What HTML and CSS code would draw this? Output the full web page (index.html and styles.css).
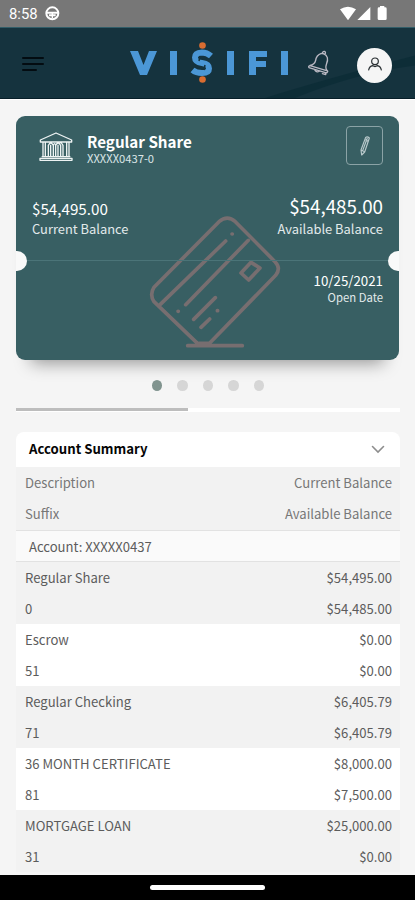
FILE: index.html
```html
<!DOCTYPE html>
<html lang="en">
<head>
<meta charset="utf-8">
<title>Visifi</title>
<link rel="stylesheet" href="styles.css">
</head>
<body>
<div class="status">
  <span class="time">8:58</span>
  <svg class="wheel" viewBox="0 0 45 45"><circle cx="22" cy="22" r="18" fill="none" stroke="#fff" stroke-width="6"/><path d="M5 20H39M12 28H32" stroke="#fff" stroke-width="6"/><path d="M22 20V36" stroke="#fff" stroke-width="4"/></svg>
  <svg class="signals" viewBox="0 0 144 45"><path d="M3 10Q27 -6 51 10L27 43ZM55 42L94 3V42ZM116 8Q116 4 120 4H123V0H136V4H139Q143 4 143 8V38Q143 42 139 42H120Q116 42 116 38Z" fill="#fff"/></svg>
</div>
<header class="top">
  <svg class="swoosh" viewBox="0 0 150 71" preserveAspectRatio="none"><path d="M0 71Q60 52 150 28V38Q90 46 30 71Z"/></svg>
  <svg class="burger" viewBox="0 0 22 16"><path d="M1 2H21M1 8H21M1 14H14" stroke="#030c11" stroke-width="2" stroke-linecap="round"/></svg>
  <svg class="logo" viewBox="0 0 160 44" role="img" aria-label="Visifi">
    <g fill="#4b97d6"><path d="M0 10H8L13.5 24L19 10H27L17 34H10ZM40 10H47V34H40ZM97 10H104V34H97ZM119 10H137V16H126V20H136V26H126V34H119ZM151 10H158V34H151Z"/></g>
    <path d="M81 15Q77 11.500 72 11.500Q65 12 65 16.500Q65 21 72 22Q79 23 79 27.500Q79 32 72 32Q66 32 62.500 29" fill="none" stroke="#4b97d6" stroke-width="6"/>
    <path d="M70 15L69 20M75 24L74 29" stroke="#15333e" stroke-width="1.500"/>
    <circle cx="72.500" cy="4.500" r="3.300" fill="#d96d31"/><circle cx="72.500" cy="38.500" r="3.300" fill="#d96d31"/>
  </svg>
  <svg class="bell" viewBox="0 0 70 80" fill="none" stroke="#b9b8c2" stroke-width="4" stroke-linecap="round" stroke-linejoin="round"><path d="M42 10Q27 15 25 31Q22 43 8 46Q3 48 5 52L54 67Q60 69 61 63Q52 55 57 42Q67 19 48 11ZM46 9Q46 3 51 4Q56 6 53 12M8 46L60 62M22 58Q27 68 36 63M54 67L55 73L45 70"/></svg>
  <div class="avatar"><svg viewBox="0 0 42 42" fill="none" stroke="#292f32" stroke-width="3.600" stroke-linecap="round"><circle cx="21" cy="13" r="10"/><path d="M2 39Q4 28 14 26L21 29L28 26Q38 28 40 39"/></svg></div>
</header>
<main>
  <section class="card">
    <svg class="mark" viewBox="0 0 450 465" fill="none" stroke="#776e70" stroke-width="11" stroke-linecap="round" stroke-linejoin="round"><path d="M42 247L237 50Q262 29 286 50L405 170Q424 190 407 211L210 413M170 413L42 290Q28 269 42 247M61 298L257 108M325 106L137 299M226 278L161 343M209 342L183 367M143 422H307M177 415H205M333 172L360 189L326 225L303 204Z"/><path d="M276 87h1M114 319h1M232 317h1"/></svg>
    <div class="head">
      <svg class="bank" viewBox="0 0 102 90" fill="none" stroke="#edf3f3" stroke-width="4" stroke-linejoin="round"><path d="M4 24L51 3L98 24V30H4ZM8 74H94M3 79H99V85H3ZM12 31V73M19 31V73M83 31V73M90 31V73M28 73V40Q35 26 43 40V73M35 73V38M50 73V40Q57 26 65 40V73M57 73V38M72 73V40Q67 30 62 32M43 40Q47 30 50 40"/></svg>
      <div class="title"><b>Regular Share</b><span>XXXXX0437-0</span></div>
      <div class="edit"><svg viewBox="0 0 30 60" fill="none" stroke="#b9c9cb" stroke-width="3.500" stroke-linejoin="round"><path d="M3 42L17 4Q22 0 28 6L14 48L5 57ZM8 44L22 6M4 43L14 47M15 11L25 15"/></svg></div>
    </div>
    <div class="balances">
      <div class="bal"><span class="amt">$54,495.00</span><span class="lab">Current Balance</span></div>
      <div class="bal right"><span class="amt big">$54,485.00</span><span class="lab">Available Balance</span></div>
    </div>
    <div class="tear"></div>
    <div class="opened"><span class="date">10/25/2021</span><span class="small">Open Date</span></div>
  </section>
  <div class="dots"><i class="on"></i><i></i><i></i><i></i><i></i></div>
  <div class="track"><div class="thumb"></div></div>
  <section class="summary">
    <h2><span>Account Summary</span><svg viewBox="0 0 14 9"><path d="M1.500 1.500L7 7L12.500 1.500" fill="none" stroke="#8d8d8d" stroke-width="1.600" stroke-linecap="round"/></svg></h2>
    <div class="group labels"><div class="row"><span>Description</span><span>Current Balance</span></div><div class="row"><span>Suffix</span><span>Available Balance</span></div></div>
    <div class="account">Account: XXXXX0437</div>
    <div class="group"><div class="row"><span>Regular Share</span><span>$54,495.00</span></div><div class="row"><span>0</span><span>$54,485.00</span></div></div>
    <div class="group white"><div class="row"><span>Escrow</span><span>$0.00</span></div><div class="row"><span>51</span><span>$0.00</span></div></div>
    <div class="group"><div class="row"><span>Regular Checking</span><span>$6,405.79</span></div><div class="row"><span>71</span><span>$6,405.79</span></div></div>
    <div class="group white"><div class="row"><span>36 MONTH CERTIFICATE</span><span>$8,000.00</span></div><div class="row"><span>81</span><span>$7,500.00</span></div></div>
    <div class="group"><div class="row"><span>MORTGAGE LOAN</span><span>$25,000.00</span></div><div class="row"><span>31</span><span>$0.00</span></div></div>
  </section>
</main>
<footer class="nav"><div class="pill"></div></footer>
</body>
</html>
```
FILE: styles.css
```css
* { box-sizing: border-box; }
body { margin: 0; width: 415px; height: 900px; overflow: hidden; display: flex; flex-direction: column; background: #f5f5f5; font-family: "Noto Sans CJK SC", "Noto Sans", sans-serif; color: #5c5c5c; }
svg { display: block; flex: none; }
.status { height: 27px; flex: none; background: #777; display: flex; align-items: center; padding: 0 28px 0 9px; }
.time { font: 14.8px/28px Roboto, sans-serif; color: #fff; width: 36px; }
.wheel { width: 15px; height: 15px; }
.signals { width: 48px; height: 15px; margin-left: auto; }
.top { position: relative; height: 72px; flex: none; background: #15333e; border-top: 1px solid #315d68; border-bottom: 1px solid #071f29; display: flex; align-items: center; padding: 0 23px 0 22px; }
.swoosh { position: absolute; right: 0; top: 0; width: 150px; height: 70px; fill: #08293399; }
.burger { width: 22px; height: 16px; margin-top: 2px; }
.logo { width: 160px; height: 44px; margin-left: 86px; }
.bell { position: relative; width: 24px; height: 27px; margin-left: 17px; }
.avatar { position: relative; width: 35px; height: 35px; margin: 5px 0 0 auto; background: #f5f5f5; border-radius: 50%; display: grid; place-items: center; }
.avatar svg { width: 14px; height: 14px; margin-top: -3px; }
main { flex: 1; min-height: 0; padding: 17px 15px 0 16px; overflow: hidden; border-top: 1px solid #fff; }
.card { position: relative; width: 383px; height: 244px; margin-top: -1px; background: #385f63; border-radius: 9px; color: #fff; box-shadow: 0 18px 16px -15px rgba(0,0,0,.4); }
.mark { position: absolute; left: 124px; top: 89px; width: 150px; height: 155px; }
.head { position: relative; height: 78px; padding: 10px 16px 0 23px; display: flex; align-items: flex-start; }
.bank { width: 34px; height: 30px; margin-top: 6px; }
.title { margin-left: 14px; display: flex; flex-direction: column; padding-top: 5px; }
.title b { font-size: 15.2px; line-height: 20px; }
.title span { font-size: 11.2px; line-height: 15px; color: #dce6e7; }
.edit { margin-left: auto; width: 37px; height: 39px; border: 1px solid #8ba3a6; border-radius: 4px; display: grid; place-items: center; }
.edit svg { width: 10px; height: 20px; }
.balances { position: relative; height: 66px; padding: 0 16px; display: flex; justify-content: space-between; }
.bal { display: flex; flex-direction: column; }
.right { text-align: right; }
.amt { height: 25px; font-size: 15.2px; line-height: 24px; padding-top: 2px; }
.amt.big { font-size: 18.8px; padding: 0; }
.lab { font-size: 12.9px; line-height: 20px; color: #e2eaeb; }
.tear { height: 1px; position: relative; background: #4b7478; }
.tear::before, .tear::after { content: ""; position: absolute; top: -9px; width: 11px; height: 20px; background: #f9f9f9; }
.tear::before { left: 0; border-radius: 0 10px 10px 0; }
.tear::after { right: 0; border-radius: 10px 0 0 10px; }
.opened { position: relative; display: flex; flex-direction: column; text-align: right; padding: 11px 16px 0; }
.date { font-size: 13.3px; line-height: 17px; }
.small { font-size: 11.3px; line-height: 16px; color: #e2eaeb; }
.dots { display: flex; justify-content: center; gap: 15px; margin: 20px 0 17px; }
.dots i { width: 10.4px; height: 11px; border-radius: 50%; background: #d6d6d6; }
.dots .on { background: #81948f; }
.track { height: 4px; background: #fff; }
.thumb { width: 172px; height: 3px; background: #bdbdbd; }
.summary { margin-top: 20px; font-size: 13.1px; }
.summary h2 { margin: 0; height: 35px; background: #fff; border-radius: 8px 8px 0 0; display: flex; align-items: center; justify-content: space-between; padding: 0 15px 0 13px; font-size: 13.2px; color: #050505; }
.summary h2 span { margin-top: -2px; }
.summary h2 svg { width: 14px; height: 9px; }
.group { background: #f2f2f2; }
.group.white { background: #fff; }
.labels { height: 63px; color: #777; }
.row { height: 31.05px; line-height: 31px; display: flex; justify-content: space-between; padding: 0 8px 0 9px; }
.account { height: 32px; line-height: 31px; padding-left: 13px; background: #fafafa; border: solid #e2e2e2; border-width: 1px 0; }
.nav { height: 25px; flex: none; background: #000; display: grid; place-items: center; }
.pill { width: 115px; height: 5px; border-radius: 3px; background: #fff; }
```
